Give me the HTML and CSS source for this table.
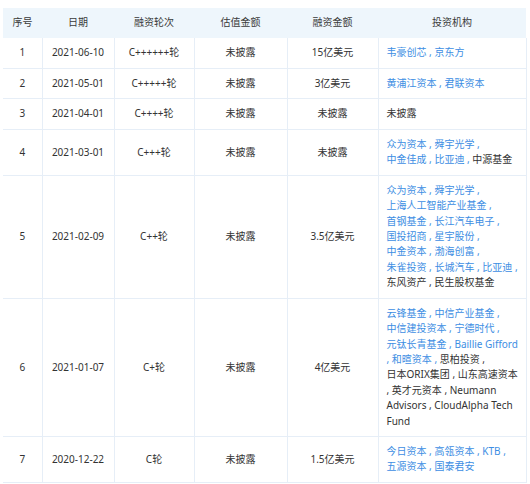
FILE: index.html
```html
<!DOCTYPE html>
<html lang="zh-CN">
<head>
<meta charset="utf-8">
<title>融资历程</title>
<link rel="stylesheet" href="styles.css">
</head>
<body>
<div class="page">
  <table class="funding">
    <colgroup>
      <col class="c-no">
      <col class="c-date">
      <col class="c-round">
      <col class="c-val">
      <col class="c-amt">
      <col class="c-inv">
    </colgroup>
    <thead>
      <tr>
        <th>序号</th>
        <th>日期</th>
        <th>融资轮次</th>
        <th>估值金额</th>
        <th>融资金额</th>
        <th>投资机构</th>
      </tr>
    </thead>
    <tbody>
      <tr>
        <td>1</td>
        <td>2021-06-10</td>
        <td>C++++++轮</td>
        <td>未披露</td>
        <td>15亿美元</td>
        <td class="inv"><span class="ln"><a>韦豪创芯 ,</a> <a>京东方</a></span></td>
      </tr>
      <tr>
        <td>2</td>
        <td>2021-05-01</td>
        <td>C+++++轮</td>
        <td>未披露</td>
        <td>3亿美元</td>
        <td class="inv"><span class="ln"><a>黄浦江资本 ,</a> <a>君联资本</a></span></td>
      </tr>
      <tr>
        <td>3</td>
        <td>2021-04-01</td>
        <td>C++++轮</td>
        <td>未披露</td>
        <td>未披露</td>
        <td class="inv"><span class="ln">未披露</span></td>
      </tr>
      <tr>
        <td>4</td>
        <td>2021-03-01</td>
        <td>C+++轮</td>
        <td>未披露</td>
        <td>未披露</td>
        <td class="inv">
          <span class="ln"><a>众为资本 ,</a> <a>舜宇光学 ,</a></span>
          <span class="ln"><a>中金佳成 ,</a> <a>比亚迪 ,</a> 中源基金</span>
        </td>
      </tr>
      <tr>
        <td>5</td>
        <td>2021-02-09</td>
        <td>C++轮</td>
        <td>未披露</td>
        <td>3.5亿美元</td>
        <td class="inv">
          <span class="ln"><a>众为资本 ,</a> <a>舜宇光学 ,</a></span>
          <span class="ln"><a>上海人工智能产业基金 ,</a></span>
          <span class="ln"><a>首钢基金 ,</a> <a>长江汽车电子 ,</a></span>
          <span class="ln"><a>国投招商 ,</a> <a>星宇股份 ,</a></span>
          <span class="ln"><a>中金资本 ,</a> <a>渤海创富 ,</a></span>
          <span class="ln"><a>朱雀投资 ,</a> <a>长城汽车 ,</a> <a>比亚迪 ,</a></span>
          <span class="ln">东风资产 , 民生股权基金</span>
        </td>
      </tr>
      <tr>
        <td>6</td>
        <td>2021-01-07</td>
        <td>C+轮</td>
        <td>未披露</td>
        <td>4亿美元</td>
        <td class="inv">
          <span class="ln"><a>云锋基金 ,</a> <a>中信产业基金 ,</a></span>
          <span class="ln"><a>中信建投资本 ,</a> <a>宁德时代 ,</a></span>
          <span class="ln"><a>元钛长青基金 ,</a> <a>Baillie Gifford</a></span>
          <span class="ln"><a>, 和暄资本 ,</a> 思柏投资 ,</span>
          <span class="ln">日本ORIX集团 , 山东高速资本</span>
          <span class="ln">, 英才元资本 , Neumann</span>
          <span class="ln">Advisors , CloudAlpha Tech</span>
          <span class="ln">Fund</span>
        </td>
      </tr>
      <tr>
        <td>7</td>
        <td>2020-12-22</td>
        <td>C轮</td>
        <td>未披露</td>
        <td>1.5亿美元</td>
        <td class="inv">
          <span class="ln"><a>今日资本 ,</a> <a>高瓴资本 ,</a> <a>KTB ,</a></span>
          <span class="ln"><a>五源资本 ,</a> <a>国泰君安</a></span>
        </td>
      </tr>
    </tbody>
  </table>
</div>
</body>
</html>
```

FILE: styles.css
```css
html, body {
  margin: 0;
  padding: 0;
  background: #ffffff;
}

.page {
  padding: 8px 4px 0 3px;
  font-family: "Noto Sans", "Noto Sans CJK SC", sans-serif;
  font-size: 10px;
  line-height: 15.4px;
  color: #333333;
}

.funding {
  width: 523px;
  border-collapse: collapse;
  table-layout: fixed;
}

.c-no { width: 39px; }
.c-date { width: 72px; }
.c-round { width: 80px; }
.c-val { width: 93px; }
.c-amt { width: 91px; }
.c-inv { width: 148px; }

.funding th {
  background: #eef6fc;
  font-weight: normal;
  color: #3a3a3a;
  text-align: center;
  padding: 7px 0;
  height: 16px;
}

.funding td {
  text-align: center;
  vertical-align: middle;
  padding: 7.1px 0;
  border-right: 1px solid #e6eef7;
  border-bottom: 1px solid #e6eef7;
  white-space: nowrap;
}

.funding td.inv {
  text-align: left;
  padding: 7.1px 8px;
}

.ln {
  display: block;
  height: 15.4px;
}

.funding a {
  color: #3d8ee3;
  text-decoration: none;
}
```
